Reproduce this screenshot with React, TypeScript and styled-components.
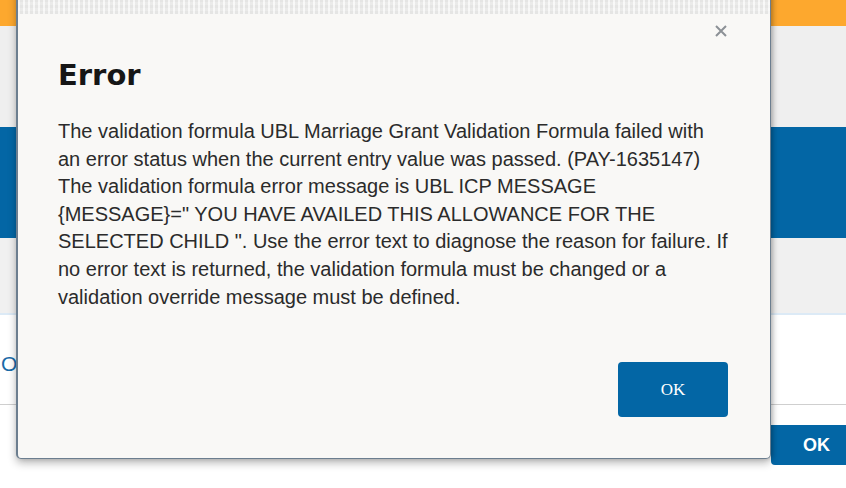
import React from "react";
import styled, { createGlobalStyle } from "styled-components";

const GlobalStyle = createGlobalStyle`
  html, body {
    margin: 0;
    padding: 0;
    background: #ffffff;
    overflow: hidden;
  }
  body {
    font-family: "Liberation Sans", Arial, sans-serif;
  }
`;

const Page = styled.div`
  position: relative;
  width: 846px;
  height: 488px;
  display: flex;
  flex-direction: column;
  overflow: hidden;
`;

const Band = styled.div<{ $bg: string; $h: number }>`
  flex: none;
  height: ${(p) => p.$h}px;
  background: ${(p) => p.$bg};
`;

const ContentRow = styled.div`
  flex: none;
  height: 89px;
  display: flex;
  align-items: center;
  border-top: 2px solid #dceaf6;
  border-bottom: 1px solid #cfcfcf;
  padding-left: 1px;
`;

const Link = styled.span`
  font-size: 21px;
  color: #1a6aa8;
  margin-top: 8px;
`;

const Footer = styled.div`
  display: flex;
  justify-content: flex-end;
  padding-top: 20px;
`;

const PageButton = styled.button`
  width: 75px;
  height: 40px;
  border: none;
  border-radius: 0 0 0 4px;
  background: #0366a5;
  color: #ffffff;
  font-family: "Liberation Sans", Arial, sans-serif;
  font-weight: bold;
  font-size: 18px;
  padding: 0 0 0 32px;
  text-align: left;
`;

const Dialog = styled.div`
  position: absolute;
  left: 16px;
  top: -20px;
  width: 752px;
  height: 477px;
  background: #f9f8f6;
  border: 1px solid #6c7e8f;
  border-left-width: 2px;
  border-radius: 0 0 5px 5px;
  box-shadow: 0 4px 9px rgba(0, 0, 0, 0.28), 2px 0 4px rgba(0, 0, 0, 0.15);
  display: flex;
  flex-direction: column;
`;

const DragStrip = styled.div`
  height: 33px;
  flex: none;
  background:
    repeating-linear-gradient(90deg, rgba(255,255,255,0.5) 0 2px, rgba(0,0,0,0.03) 2px 5px),
    repeating-linear-gradient(0deg, #ececeb 0 3px, #f2f2f1 3px 6px);
`;

const CloseButton = styled.button`
  position: absolute;
  right: 42px;
  top: 43px;
  width: 14px;
  height: 14px;
  padding: 0;
  border: none;
  background: none;
  display: flex;
  align-items: center;
  justify-content: center;
`;

const Body = styled.div`
  flex: 1;
  display: flex;
  flex-direction: column;
  padding: 44px 40px 0 40px;
`;

const Title = styled.h1`
  margin: 0;
  font-family: "DejaVu Sans", Verdana, sans-serif;
  font-weight: bold;
  font-size: 29px;
  line-height: 34px;
  color: #161616;
`;

const Message = styled.p`
  margin: 26px 0 0 0;
  font-size: 20px;
  line-height: 27.6px;
  color: #2b2b2b;
  white-space: nowrap;
`;

const Actions = styled.div`
  display: flex;
  justify-content: flex-end;
  margin-top: 51px;
  padding-right: 2px;
`;

const OkButton = styled.button`
  width: 110px;
  height: 55px;
  border: none;
  border-radius: 4px;
  background: #0366a5;
  color: #ffffff;
  font-family: "Liberation Serif", "Times New Roman", serif;
  font-size: 17px;
  padding: 0;
`;

const lines = [
  "The validation formula UBL Marriage Grant Validation Formula failed with",
  "an error status when the current entry value was passed. (PAY-1635147)",
  "The validation formula error message is UBL ICP MESSAGE",
  '{MESSAGE}=" YOU HAVE AVAILED THIS ALLOWANCE FOR THE',
  'SELECTED CHILD ". Use the error text to diagnose the reason for failure. If',
  "no error text is returned, the validation formula must be changed or a",
  "validation override message must be defined.",
];

export default function App() {
  return (
    <>
      <GlobalStyle />
      <Page>
        <Band $bg="#fda82e" $h={26} />
        <Band $bg="#efefef" $h={101} />
        <Band $bg="#0366a5" $h={111} />
        <Band $bg="#f0f0f0" $h={75} />
        <ContentRow>
          <Link>Open</Link>
        </ContentRow>
        <Footer>
          <PageButton>OK</PageButton>
        </Footer>

        <Dialog role="dialog">
          <DragStrip />
          <CloseButton aria-label="Close">
            <svg width="12" height="12" viewBox="0 0 12 12">
              <path d="M1 1 L11 11 M11 1 L1 11" stroke="#8c9196" strokeWidth="2" />
            </svg>
          </CloseButton>
          <Body>
            <Title>Error</Title>
            <Message>
              {lines.map((line, i) => (
                <React.Fragment key={i}>
                  {line}
                  {i < lines.length - 1 && <br />}
                </React.Fragment>
              ))}
            </Message>
            <Actions>
              <OkButton>OK</OkButton>
            </Actions>
          </Body>
        </Dialog>
      </Page>
    </>
  );
}
